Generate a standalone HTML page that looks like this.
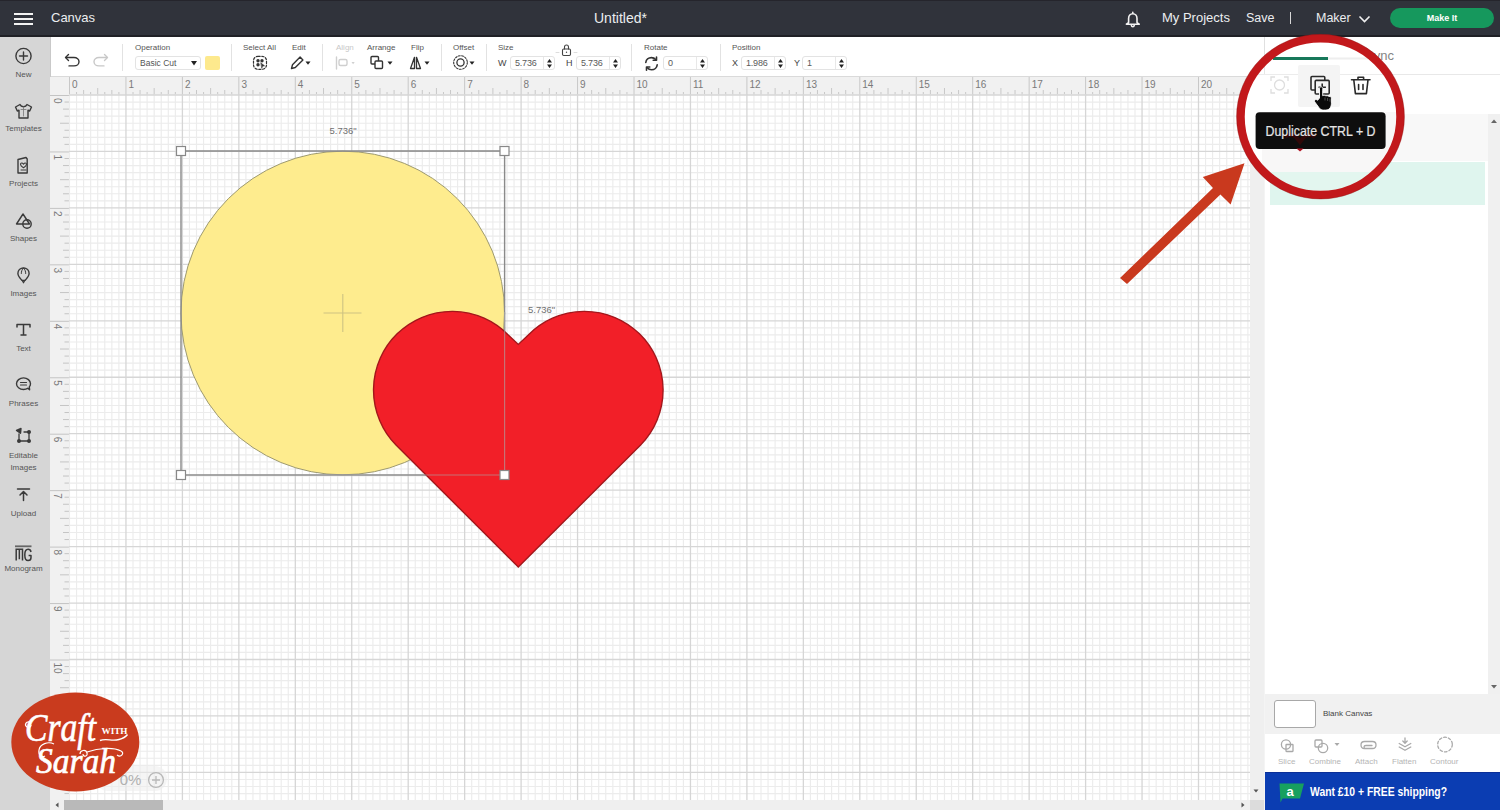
<!DOCTYPE html>
<html><head><meta charset="utf-8">
<style>
*{margin:0;padding:0;box-sizing:border-box}
html,body{width:1500px;height:810px;overflow:hidden;background:#fff;font-family:"Liberation Sans",sans-serif;position:relative}
.abs{position:absolute}
svg{position:absolute;overflow:visible}
#top{left:0;top:0;width:1500px;height:37px;background:#30333b;border-top:1px solid #25252c;border-bottom:2px solid #1f2025}
.tt{position:absolute;color:#eceef0;font-size:13px;line-height:1;white-space:nowrap}
#side{left:0;top:37px;width:51px;height:773px;background:#d6d6d6}
.sl{position:absolute;left:0;width:47px;text-align:center;font-size:8px;color:#555;line-height:1;white-space:nowrap}
#tool{left:51px;top:37px;width:1214px;height:40px;background:#fff;border-bottom:1.5px solid #dadada}
.lab{position:absolute;font-size:8px;color:#555;line-height:1;white-space:nowrap}
.sep{position:absolute;top:44px;width:1px;height:27px;background:#e2e2e2}
.inp{position:absolute;top:56px;height:14px;border:1px solid #e3e3e3;border-radius:3px;background:#fff;font-size:9px;color:#5a5a5a;line-height:12.5px;padding-left:4px;letter-spacing:-.2px}
.spin{position:absolute;right:0;top:0;width:11px;height:12px;border-left:1px solid #e8e8e8}
#panel{left:1264px;top:37px;width:236px;height:773px;background:#fff;border-left:1px solid #f4f4f4}
</style></head><body>

<!-- TOP BAR -->
<div id="top" class="abs">
  <div class="abs" style="left:14px;top:12px;width:19px;height:2px;background:#f2f2f2"></div>
  <div class="abs" style="left:14px;top:17px;width:19px;height:2px;background:#f2f2f2"></div>
  <div class="abs" style="left:14px;top:22px;width:19px;height:2px;background:#f2f2f2"></div>
  <div class="tt" style="left:51px;top:10px">Canvas</div>
  <div class="tt" style="left:594px;top:10px;font-size:14px">Untitled*</div>
  <svg style="left:1125px;top:10px" width="17" height="17" viewBox="0 0 17 17"><path d="M7.8 1.4v1.3M3.6 11.6V7.6c0-2.9 1.8-4.9 4.2-4.9s4.2 2 4.2 4.9v4l2.2 1.6H1.4zM6.2 13.6c.2 1.4.8 2.2 1.6 2.2s1.4-.8 1.6-2.2" fill="none" stroke="#f2f2f2" stroke-width="1.6" stroke-linejoin="round" stroke-linecap="round"/></svg>
  <div class="tt" style="left:1162px;top:10px">My Projects</div>
  <div class="tt" style="left:1246px;top:10px;font-size:12.5px;top:10.5px">Save</div>
  <div class="abs" style="left:1290px;top:11px;width:1.2px;height:12px;background:#d8d8d8"></div>
  <div class="tt" style="left:1316px;top:10px;font-size:12.5px;top:10.5px">Maker</div>
  <svg style="left:1358px;top:14px" width="13" height="8" viewBox="0 0 13 8"><path d="M1.5 1.5l5 5 5-5" fill="none" stroke="#f0f0f0" stroke-width="1.6"/></svg>
  <div class="abs" style="left:1390px;top:7px;width:104px;height:20px;border-radius:10px;background:#16985d;color:#fff;font-size:9px;font-weight:bold;text-align:center;line-height:20px">Make It</div>
</div>

<!-- SIDEBAR -->
<div id="side" class="abs"></div>
<div class="abs" style="left:49.5px;top:37px;width:1.5px;height:773px;background:#c9c9c9"></div>
<svg style="left:0;top:37px" width="51" height="560" viewBox="0 37 51 560" fill="none" stroke="#3a3a3a" stroke-width="1.4" stroke-linecap="round" stroke-linejoin="round">
  <!-- New -->
  <circle cx="23.5" cy="56" r="7.6"/><path d="M23.5 52v8M19.5 56h8"/>
  <!-- Templates shirt -->
  <path d="M20 104.5l-4.5 2.5 1.8 4 1.7-.8V118h9v-7.8l1.7.8 1.8-4-4.5-2.5c-.6 1.5-1.7 2.2-3.5 2.2s-2.9-.7-3.5-2.2z"/><path d="M23.5 107v9M21 109.5h5" stroke-width=".8" stroke="#777"/>
  <!-- Projects -->
  <path d="M18 159.5l8-2 1.2 1.5V173H18z"/><path d="M20.5 164.2c0-1.6 2-1.6 3 0 1-1.6 3-1.6 3 0 0 1.5-1.5 2.6-3 3.6-1.5-1-3-2.1-3-3.6z" stroke-width="1.1"/><path d="M21 170h5" stroke-width="1"/>
  <!-- Shapes -->
  <path d="M23 214l-6.5 10h13z"/><circle cx="27" cy="224" r="4.2"/>
  <!-- Images balloon -->
  <path d="M23.5 268c-3.3 0-5.6 2.4-5.6 5.4 0 2.7 2.4 5 4 7h3.2c1.6-2 4-4.3 4-7 0-3-2.3-5.4-5.6-5.4z"/><path d="M23.5 268c-1.6 1.5-2.2 3.5-2.2 5.5M23.5 268c1.6 1.5 2.2 3.5 2.2 5.5" stroke-width="1"/><path d="M22.2 280.5l1.3 2.3 1.3-2.3" stroke-width="1.2"/>
  <!-- Text T -->
  <path d="M17 327v-2.5h13v2.5M23.5 324.5V335M21 335h5" stroke-width="1.5"/>
  <!-- Phrases bubble -->
  <path d="M29.6 389.8l-1.8-1.6c-1.2.9-2.7 1.3-4.3 1.3-3.9 0-7-2.6-7-5.8s3.1-5.8 7-5.8 7 2.6 7 5.8c0 1.2-.4 2.3-1.2 3.2z"/><path d="M20.5 382.5h6M20.5 385h6" stroke-width="1.2"/>
  <!-- Editable -->
  <path d="M19 434v7h10v-9h-5" stroke-width="1.3"/><circle cx="19" cy="441" r="1.3" fill="#3a3a3a"/><circle cx="29" cy="441" r="1.3" fill="#3a3a3a"/><circle cx="29" cy="432" r="1.3" fill="#3a3a3a"/><path d="M16.5 430.5l4.5-2 -.5 4.8z" fill="#3a3a3a"/>
  <!-- Upload -->
  <path d="M17.5 489h12M23.5 500.5v-8.5M20 495l3.5-3.5 3.5 3.5" stroke-width="1.5"/>
  <!-- Monogram -->
  <path d="M15 546.3h16.5" stroke-width="1.8" stroke-linecap="butt" stroke="#666"/>
  <path d="M16.2 560.5V549.3h6.3v11.2M19.35 549.3v10" stroke-width="1.5" stroke-linecap="butt" stroke-linejoin="miter"/>
  <path d="M31 552c-.3-1.7-1.4-2.7-2.9-2.7-2 0-3.3 2-3.3 5.6s1.3 5.6 3.3 5.6c1.7 0 2.9-1.1 2.9-3.1v-2h-2.4" stroke-width="1.5" stroke-linecap="butt"/>
</svg>
<div class="sl" style="top:70.5px">New</div>
<div class="sl" style="top:125px">Templates</div>
<div class="sl" style="top:179.5px">Projects</div>
<div class="sl" style="top:234.5px">Shapes</div>
<div class="sl" style="top:289.5px">Images</div>
<div class="sl" style="top:344.5px">Text</div>
<div class="sl" style="top:399.5px">Phrases</div>
<div class="sl" style="top:452px">Editable</div>
<div class="sl" style="top:464px">Images</div>
<div class="sl" style="top:509.5px">Upload</div>
<div class="sl" style="top:564.5px">Monogram</div>

<!-- TOOLBAR -->
<div id="tool" class="abs"></div>
<svg style="left:0;top:0" width="1265" height="80" fill="none" stroke="#333" stroke-width="1.4" stroke-linecap="round" stroke-linejoin="round">
  <!-- undo -->
  <path d="M66 57.5h8c3 0 5 2 5 4.2s-2 4.2-5 4.2h-5" /><path d="M68.5 54.5L65.5 57.5 68.5 60.5"/>
  <!-- redo -->
  <path d="M107 57.5h-8c-3 0-5 2-5 4.2s2 4.2 5 4.2h5" stroke="#c8c8c8"/><path d="M104.5 54.5l3 3-3 3" stroke="#c8c8c8"/>
  <!-- select all -->
  <rect x="253.5" y="56.3" width="13" height="13" rx="4.5" stroke-dasharray="2.2 1.6" stroke-width="1.2"/><circle cx="258" cy="60.8" r="1" fill="#333"/><circle cx="262" cy="60.8" r="1" fill="#333"/><circle cx="258" cy="64.8" r="1" fill="#333"/><path d="M261 63l3.5 2.8-2 .4-.6 1.8z" fill="#333" stroke-width=".6"/>
  <!-- edit pencil -->
  <path d="M291.5 68.5l1-3.8 7.6-7.6 2.8 2.8-7.6 7.6z"/><path d="M305.5 61.5l2.5 3.2 2.5-3.2z" fill="#222" stroke="none"/>
  <!-- align (disabled) -->
  <path d="M336.5 57v12" stroke="#cfcfcf"/><rect x="339" y="59.5" width="8" height="6" rx="1.5" stroke="#cfcfcf"/><path d="M351.5 62l1.6 2.2 1.6-2.2z" fill="#d0d0d0" stroke="none"/>
  <!-- arrange -->
  <rect x="371" y="56.5" width="7.5" height="7.5" rx="1"/><rect x="375" y="61" width="7.5" height="7.5" rx="1" fill="#fff"/><path d="M387.5 61.5l2.5 3.2 2.5-3.2z" fill="#222" stroke="none"/>
  <!-- flip -->
  <path d="M410.5 68.5l4-11.2v11.2zM420.5 68.5l-4-11.2v11.2z" stroke-width="1.3"/><path d="M424.5 61.5l2.5 3.2 2.5-3.2z" fill="#222" stroke="none"/>
  <!-- offset -->
  <circle cx="460.5" cy="62.5" r="6.8" stroke-dasharray="1.8 1.5" stroke-width="1.1"/><circle cx="460.5" cy="62.5" r="3.6" stroke-width="1.3"/><path d="M469.5 61.5l2.5 3.2 2.5-3.2z" fill="#222" stroke="none"/>
  <!-- lock -->
  <rect x="562.5" y="49" width="8" height="6.5" rx="1.2" stroke-width="1.1" stroke="#444"/><path d="M564.5 49v-2a2 2 0 014 0v2" stroke-width="1.1" stroke="#444"/><circle cx="566.5" cy="52.3" r=".7" fill="#444" stroke="none"/>
  <path d="M556 52.5h3M574 52.5h3" stroke="#ddd" stroke-width="1"/>
  <!-- rotate -->
  <path d="M645.8 62.5c.3-2.9 2.7-4.9 5.6-4.9 1.8 0 3.3.8 4.3 2M657.2 64.8c-.3 2.9-2.7 4.9-5.6 4.9-1.8 0-3.3-.8-4.3-2" stroke-width="1.6"/><path d="M656.5 57v3.3h-3.3M646.5 70.3V67h3.3" stroke-width="1.6"/>
</svg>
<div class="lab" style="left:135px;top:44px">Operation</div>
<div class="inp" style="left:135px;width:66px;color:#555;font-size:8.5px;letter-spacing:0">Basic Cut<svg style="left:55px;top:4px" width="6" height="5"><path d="M0 0h6L3 4.5z" fill="#222"/></svg></div>
<div class="abs" style="left:205px;top:56px;width:15px;height:14px;background:#fde98d;border-radius:2px"></div>
<div class="sep" style="left:122px"></div>
<div class="sep" style="left:231px"></div>
<div class="lab" style="left:243px;top:44px">Select All</div>
<div class="lab" style="left:292px;top:44px">Edit</div>
<div class="sep" style="left:322px"></div>
<div class="lab" style="left:336px;top:44px;color:#c8c8c8">Align</div>
<div class="lab" style="left:367px;top:44px">Arrange</div>
<div class="lab" style="left:411px;top:44px">Flip</div>
<div class="sep" style="left:441px"></div>
<div class="lab" style="left:453px;top:44px">Offset</div>
<div class="sep" style="left:486px"></div>
<div class="lab" style="left:498px;top:44px">Size</div>
<div class="lab" style="left:498px;top:58.5px;color:#444;font-size:9px">W</div>
<div class="inp" style="left:510px;width:45px">5.736<div class="spin"><svg style="left:3px;top:2px" width="5" height="9"><path d="M0 3.5L2.5 0 5 3.5zM0 5.5h5L2.5 9z" fill="#222"/></svg></div></div>
<div class="lab" style="left:566px;top:58.5px;color:#444;font-size:9px">H</div>
<div class="inp" style="left:576px;width:45px">5.736<div class="spin"><svg style="left:3px;top:2px" width="5" height="9"><path d="M0 3.5L2.5 0 5 3.5zM0 5.5h5L2.5 9z" fill="#222"/></svg></div></div>
<div class="sep" style="left:631px"></div>
<div class="lab" style="left:644px;top:44px">Rotate</div>
<div class="inp" style="left:663px;width:45px">0<div class="spin"><svg style="left:3px;top:2px" width="5" height="9"><path d="M0 3.5L2.5 0 5 3.5zM0 5.5h5L2.5 9z" fill="#222"/></svg></div></div>
<div class="sep" style="left:720px"></div>
<div class="lab" style="left:732px;top:44px">Position</div>
<div class="lab" style="left:732px;top:58.5px;color:#444;font-size:9px">X</div>
<div class="inp" style="left:741px;width:45px">1.986<div class="spin"><svg style="left:3px;top:2px" width="5" height="9"><path d="M0 3.5L2.5 0 5 3.5zM0 5.5h5L2.5 9z" fill="#222"/></svg></div></div>
<div class="lab" style="left:794px;top:58.5px;color:#444;font-size:9px">Y</div>
<div class="inp" style="left:802px;width:45px">1<div class="spin"><svg style="left:3px;top:2px" width="5" height="9"><path d="M0 3.5L2.5 0 5 3.5zM0 5.5h5L2.5 9z" fill="#222"/></svg></div></div>

<!-- RULERS -->
<svg style="left:50px;top:77px" width="1200" height="18">
  <rect width="1200" height="18" fill="#f1f1f1"/>
  <path d="M19.50 0V18M26.56 15V18M33.61 13V18M40.67 15V18M47.72 11V18M54.78 15V18M61.84 13V18M68.89 15V18M75.95 0V18M83.01 15V18M90.06 13V18M97.12 15V18M104.18 11V18M111.23 15V18M118.29 13V18M125.34 15V18M132.40 0V18M139.46 15V18M146.51 13V18M153.57 15V18M160.62 11V18M167.68 15V18M174.74 13V18M181.79 15V18M188.85 0V18M195.91 15V18M202.96 13V18M210.02 15V18M217.08 11V18M224.13 15V18M231.19 13V18M238.24 15V18M245.30 0V18M252.36 15V18M259.41 13V18M266.47 15V18M273.52 11V18M280.58 15V18M287.64 13V18M294.69 15V18M301.75 0V18M308.81 15V18M315.86 13V18M322.92 15V18M329.98 11V18M337.03 15V18M344.09 13V18M351.14 15V18M358.20 0V18M365.26 15V18M372.31 13V18M379.37 15V18M386.43 11V18M393.48 15V18M400.54 13V18M407.59 15V18M414.65 0V18M421.71 15V18M428.76 13V18M435.82 15V18M442.88 11V18M449.93 15V18M456.99 13V18M464.04 15V18M471.10 0V18M478.16 15V18M485.21 13V18M492.27 15V18M499.33 11V18M506.38 15V18M513.44 13V18M520.49 15V18M527.55 0V18M534.61 15V18M541.66 13V18M548.72 15V18M555.77 11V18M562.83 15V18M569.89 13V18M576.94 15V18M584.00 0V18M591.06 15V18M598.11 13V18M605.17 15V18M612.23 11V18M619.28 15V18M626.34 13V18M633.39 15V18M640.45 0V18M647.51 15V18M654.56 13V18M661.62 15V18M668.68 11V18M675.73 15V18M682.79 13V18M689.84 15V18M696.90 0V18M703.96 15V18M711.01 13V18M718.07 15V18M725.12 11V18M732.18 15V18M739.24 13V18M746.29 15V18M753.35 0V18M760.41 15V18M767.46 13V18M774.52 15V18M781.58 11V18M788.63 15V18M795.69 13V18M802.74 15V18M809.80 0V18M816.86 15V18M823.91 13V18M830.97 15V18M838.03 11V18M845.08 15V18M852.14 13V18M859.19 15V18M866.25 0V18M873.31 15V18M880.36 13V18M887.42 15V18M894.48 11V18M901.53 15V18M908.59 13V18M915.64 15V18M922.70 0V18M929.76 15V18M936.81 13V18M943.87 15V18M950.93 11V18M957.98 15V18M965.04 13V18M972.09 15V18M979.15 0V18M986.21 15V18M993.26 13V18M1000.32 15V18M1007.38 11V18M1014.43 15V18M1021.49 13V18M1028.54 15V18M1035.60 0V18M1042.66 15V18M1049.71 13V18M1056.77 15V18M1063.83 11V18M1070.88 15V18M1077.94 13V18M1084.99 15V18M1092.05 0V18M1099.11 15V18M1106.16 13V18M1113.22 15V18M1120.28 11V18M1127.33 15V18M1134.39 13V18M1141.44 15V18M1148.50 0V18M1155.56 15V18M1162.61 13V18M1169.67 15V18M1176.73 11V18M1183.78 15V18M1190.84 13V18M1197.89 15V18" stroke="#c8c8c8" stroke-width="1"/>
  <g font-family="Liberation Sans" font-size="10" fill="#7a7a7a"><text x="22.0" y="11" >0</text><text x="78.5" y="11" >1</text><text x="134.9" y="11" >2</text><text x="191.4" y="11" >3</text><text x="247.8" y="11" >4</text><text x="304.2" y="11" >5</text><text x="360.7" y="11" >6</text><text x="417.2" y="11" >7</text><text x="473.6" y="11" >8</text><text x="530.0" y="11" >9</text><text x="586.5" y="11" >10</text><text x="643.0" y="11" >11</text><text x="699.4" y="11" >12</text><text x="755.9" y="11" >13</text><text x="812.3" y="11" >14</text><text x="868.8" y="11" >15</text><text x="925.2" y="11" >16</text><text x="981.7" y="11" >17</text><text x="1038.1" y="11" >18</text><text x="1094.5" y="11" >19</text><text x="1151.0" y="11" >20</text></g>
</svg>
<svg style="left:50px;top:77px" width="19" height="723">
  <rect width="19" height="723" fill="#f1f1f1"/>
  <path d="M0 18.50H19M14.5 25.06H19M13 32.11H19M14.5 39.17H19M10 46.22H19M14.5 53.28H19M13 60.34H19M14.5 67.39H19M0 74.95H19M14.5 81.51H19M13 88.56H19M14.5 95.62H19M10 102.68H19M14.5 109.73H19M13 116.79H19M14.5 123.84H19M0 131.40H19M14.5 137.96H19M13 145.01H19M14.5 152.07H19M10 159.12H19M14.5 166.18H19M13 173.24H19M14.5 180.29H19M0 187.85H19M14.5 194.41H19M13 201.46H19M14.5 208.52H19M10 215.58H19M14.5 222.63H19M13 229.69H19M14.5 236.74H19M0 244.30H19M14.5 250.86H19M13 257.91H19M14.5 264.97H19M10 272.02H19M14.5 279.08H19M13 286.14H19M14.5 293.19H19M0 300.75H19M14.5 307.31H19M13 314.36H19M14.5 321.42H19M10 328.48H19M14.5 335.53H19M13 342.59H19M14.5 349.64H19M0 357.20H19M14.5 363.76H19M13 370.81H19M14.5 377.87H19M10 384.93H19M14.5 391.98H19M13 399.04H19M14.5 406.09H19M0 413.65H19M14.5 420.21H19M13 427.26H19M14.5 434.32H19M10 441.38H19M14.5 448.43H19M13 455.49H19M14.5 462.54H19M0 470.10H19M14.5 476.66H19M13 483.71H19M14.5 490.77H19M10 497.83H19M14.5 504.88H19M13 511.94H19M14.5 518.99H19M0 526.55H19M14.5 533.11H19M13 540.16H19M14.5 547.22H19M10 554.27H19M14.5 561.33H19M13 568.39H19M14.5 575.44H19M0 583.00H19M14.5 589.56H19M13 596.61H19M14.5 603.67H19M10 610.73H19M14.5 617.78H19M13 624.84H19M14.5 631.89H19M0 639.45H19M14.5 646.01H19M13 653.06H19M14.5 660.12H19M10 667.18H19M14.5 674.23H19M13 681.29H19M14.5 688.34H19M0 695.90H19M14.5 702.46H19M13 709.51H19M14.5 716.57H19" stroke="#c4c4c4" stroke-width="1"/>
  <g font-family="Liberation Sans" font-size="10" fill="#7a7a7a"><text transform="translate(4 21.0) rotate(90)" x="0" y="0">0</text><text transform="translate(4 77.4) rotate(90)" x="0" y="0">1</text><text transform="translate(4 133.9) rotate(90)" x="0" y="0">2</text><text transform="translate(4 190.4) rotate(90)" x="0" y="0">3</text><text transform="translate(4 246.8) rotate(90)" x="0" y="0">4</text><text transform="translate(4 303.2) rotate(90)" x="0" y="0">5</text><text transform="translate(4 359.7) rotate(90)" x="0" y="0">6</text><text transform="translate(4 416.2) rotate(90)" x="0" y="0">7</text><text transform="translate(4 472.6) rotate(90)" x="0" y="0">8</text><text transform="translate(4 529.0) rotate(90)" x="0" y="0">9</text><text transform="translate(4 585.5) rotate(90)" x="0" y="0">10</text><text transform="translate(4 642.0) rotate(90)" x="0" y="0">11</text><text transform="translate(4 698.4) rotate(90)" x="0" y="0">12</text></g>
</svg>

<!-- GRID -->
<svg style="left:69px;top:94px" width="1181" height="706">
  <path d="M0.50 0V706M7.56 0V706M14.61 0V706M21.67 0V706M28.72 0V706M35.78 0V706M42.84 0V706M49.89 0V706M64.01 0V706M71.06 0V706M78.12 0V706M85.18 0V706M92.23 0V706M99.29 0V706M106.34 0V706M120.46 0V706M127.51 0V706M134.57 0V706M141.62 0V706M148.68 0V706M155.74 0V706M162.79 0V706M176.91 0V706M183.96 0V706M191.02 0V706M198.08 0V706M205.13 0V706M212.19 0V706M219.24 0V706M233.36 0V706M240.41 0V706M247.47 0V706M254.52 0V706M261.58 0V706M268.64 0V706M275.69 0V706M289.81 0V706M296.86 0V706M303.92 0V706M310.98 0V706M318.03 0V706M325.09 0V706M332.14 0V706M346.26 0V706M353.31 0V706M360.37 0V706M367.43 0V706M374.48 0V706M381.54 0V706M388.59 0V706M402.71 0V706M409.76 0V706M416.82 0V706M423.88 0V706M430.93 0V706M437.99 0V706M445.04 0V706M459.16 0V706M466.21 0V706M473.27 0V706M480.33 0V706M487.38 0V706M494.44 0V706M501.49 0V706M515.61 0V706M522.66 0V706M529.72 0V706M536.77 0V706M543.83 0V706M550.89 0V706M557.94 0V706M572.06 0V706M579.11 0V706M586.17 0V706M593.23 0V706M600.28 0V706M607.34 0V706M614.39 0V706M628.51 0V706M635.56 0V706M642.62 0V706M649.68 0V706M656.73 0V706M663.79 0V706M670.84 0V706M684.96 0V706M692.01 0V706M699.07 0V706M706.12 0V706M713.18 0V706M720.24 0V706M727.29 0V706M741.41 0V706M748.46 0V706M755.52 0V706M762.58 0V706M769.63 0V706M776.69 0V706M783.74 0V706M797.86 0V706M804.91 0V706M811.97 0V706M819.03 0V706M826.08 0V706M833.14 0V706M840.19 0V706M854.31 0V706M861.36 0V706M868.42 0V706M875.48 0V706M882.53 0V706M889.59 0V706M896.64 0V706M910.76 0V706M917.81 0V706M924.87 0V706M931.93 0V706M938.98 0V706M946.04 0V706M953.09 0V706M967.21 0V706M974.26 0V706M981.32 0V706M988.38 0V706M995.43 0V706M1002.49 0V706M1009.54 0V706M1023.66 0V706M1030.71 0V706M1037.77 0V706M1044.83 0V706M1051.88 0V706M1058.94 0V706M1065.99 0V706M1080.11 0V706M1087.16 0V706M1094.22 0V706M1101.28 0V706M1108.33 0V706M1115.39 0V706M1122.44 0V706M1136.56 0V706M1143.61 0V706M1150.67 0V706M1157.73 0V706M1164.78 0V706M1171.84 0V706M1178.89 0V706M0 8.06H1181M0 15.11H1181M0 22.17H1181M0 29.22H1181M0 36.28H1181M0 43.34H1181M0 50.39H1181M0 64.51H1181M0 71.56H1181M0 78.62H1181M0 85.68H1181M0 92.73H1181M0 99.79H1181M0 106.84H1181M0 120.96H1181M0 128.01H1181M0 135.07H1181M0 142.12H1181M0 149.18H1181M0 156.24H1181M0 163.29H1181M0 177.41H1181M0 184.46H1181M0 191.52H1181M0 198.58H1181M0 205.63H1181M0 212.69H1181M0 219.74H1181M0 233.86H1181M0 240.91H1181M0 247.97H1181M0 255.02H1181M0 262.08H1181M0 269.14H1181M0 276.19H1181M0 290.31H1181M0 297.36H1181M0 304.42H1181M0 311.48H1181M0 318.53H1181M0 325.59H1181M0 332.64H1181M0 346.76H1181M0 353.81H1181M0 360.87H1181M0 367.93H1181M0 374.98H1181M0 382.04H1181M0 389.09H1181M0 403.21H1181M0 410.26H1181M0 417.32H1181M0 424.38H1181M0 431.43H1181M0 438.49H1181M0 445.54H1181M0 459.66H1181M0 466.71H1181M0 473.77H1181M0 480.83H1181M0 487.88H1181M0 494.94H1181M0 501.99H1181M0 516.11H1181M0 523.16H1181M0 530.22H1181M0 537.27H1181M0 544.33H1181M0 551.39H1181M0 558.44H1181M0 572.56H1181M0 579.61H1181M0 586.67H1181M0 593.73H1181M0 600.78H1181M0 607.84H1181M0 614.89H1181M0 629.01H1181M0 636.06H1181M0 643.12H1181M0 650.18H1181M0 657.23H1181M0 664.29H1181M0 671.34H1181M0 685.46H1181M0 692.51H1181M0 699.57H1181" stroke="#ececec" stroke-width="1.15"/>
  <path d="M56.95 0V706M113.40 0V706M169.85 0V706M226.30 0V706M282.75 0V706M339.20 0V706M395.65 0V706M452.10 0V706M508.55 0V706M565.00 0V706M621.45 0V706M677.90 0V706M734.35 0V706M790.80 0V706M847.25 0V706M903.70 0V706M960.15 0V706M1016.60 0V706M1073.05 0V706M1129.50 0V706M0 1.00H1181M0 57.45H1181M0 113.90H1181M0 170.35H1181M0 226.80H1181M0 283.25H1181M0 339.70H1181M0 396.15H1181M0 452.60H1181M0 509.05H1181M0 565.50H1181M0 621.95H1181M0 678.40H1181" stroke="#d6d6d6" stroke-width="1.3"/>
</svg>

<!-- SCROLLBARS -->
<div class="abs" style="left:1250px;top:77px;width:14px;height:733px;background:#efefef"></div>
<div class="abs" style="left:50px;top:800px;width:1200px;height:10px;background:#efefef"></div>
<div class="abs" style="left:64px;top:800px;width:99px;height:10px;background:#b9b9b9"></div>
<div class="abs" style="left:1250px;top:800px;width:14px;height:10px;background:#dcdcdc"></div>
<svg style="left:0;top:0" width="1500" height="810">
  <path d="M58.5 802.5v5l-3-2.5z" fill="#555"/>
  <path d="M1241.5 802.5v5l3-2.5z" fill="#555"/>
  <path d="M1253.5 789.5h5l-2.5 3z" fill="#555"/>
</svg>

<!-- RIGHT PANEL -->
<div id="panel" class="abs"></div>
<div class="abs" style="left:1264px;top:37px;width:1px;height:40px;background:#e0e0e0"></div>
<div class="abs" style="left:1265px;top:74px;width:235px;height:1px;background:#e8e8e8"></div>
<div class="abs" style="left:1265px;top:114px;width:223px;height:580px;background:#fff"></div>
<div class="abs" style="left:1265px;top:114px;width:223px;height:47px;background:#f8f8f8"></div>
<div class="abs" style="left:1270px;top:161.5px;width:215px;height:43.5px;background:#dff5ee"></div>
<div class="abs" style="left:1488px;top:114px;width:12px;height:580px;background:#f0f0f0"></div>
<svg style="left:1490px;top:118px" width="8" height="6"><path d="M1 5l3-3.5L7 5z" fill="#666"/></svg>
<svg style="left:1490px;top:684px" width="8" height="6"><path d="M1 1l3 3.5L7 1z" fill="#666"/></svg>
<div class="abs" style="left:1265px;top:694px;width:235px;height:40px;background:#f1f1f1"></div>
<div class="abs" style="left:1274px;top:699.5px;width:42px;height:28.5px;background:#fff;border:1.5px solid #a8a8a8;border-radius:3px"></div>
<div class="lab" style="left:1323px;top:709.5px;color:#444">Blank Canvas</div>
<svg style="left:1265px;top:734px" width="235" height="38" fill="none" stroke="#a9a9a9" stroke-width="1.3" stroke-linecap="round" stroke-linejoin="round">
  <!-- slice -->
  <circle cx="21" cy="10.5" r="4.6"/><rect x="21" y="10.5" width="7" height="7" rx=".5"/>
  <!-- combine -->
  <rect x="50" y="6" width="7" height="7" rx="1"/><circle cx="58" cy="14" r="4.7"/><path d="M69.5 9l2.5 3 2.5-3z" fill="#a9a9a9" stroke="none"/>
  <!-- attach -->
  <path d="M103 14.5h-3.5c-2.1 0-3.5-1.4-3.5-3.5s1.4-3.5 3.5-3.5h8c2.1 0 3.5 1.4 3.5 3.5s-1.4 3.5-3.5 3.5h-6.5c-1.2 0-2-.6-2-1.5s.8-1.5 2-1.5h6"/>
  <!-- flatten -->
  <path d="M140 4v5M137.8 7l2.2 2.2 2.2-2.2M134.2 9.5l5.8 3.3 5.8-3.3M134.2 13l5.8 3.3 5.8-3.3"/>
  <!-- contour -->
  <circle cx="180" cy="10.5" r="7.3" stroke-dasharray="2.6 2.1"/>
</svg>
<div class="lab" style="left:1278px;top:757.5px;color:#b5b5b5">Slice</div>
<div class="lab" style="left:1309px;top:757.5px;color:#b5b5b5">Combine</div>
<div class="lab" style="left:1355px;top:757.5px;color:#b5b5b5">Attach</div>
<div class="lab" style="left:1392px;top:757.5px;color:#b5b5b5">Flatten</div>
<div class="lab" style="left:1430px;top:757.5px;color:#b5b5b5">Contour</div>
<div class="abs" style="left:1265px;top:772px;width:235px;height:38px;background:#0b3db2;border-top:1px solid #0a2f98"></div>
<svg style="left:1278px;top:782px" width="27" height="22"><path d="M1.5 1.5h24.5l-4 15H4.5l-2 4z" fill="#17a05f"/><text x="8.5" y="13.5" font-family="Liberation Sans" font-weight="bold" font-size="13" fill="#fff">a</text></svg>
<svg style="left:1310px;top:780px" width="160" height="20"><text x="0" y="15.5" font-family="Liberation Sans" font-weight="bold" font-size="12" fill="#fff" textLength="137" lengthAdjust="spacingAndGlyphs">Want £10 + FREE shipping?</text></svg>

<!-- CANVAS OBJECTS -->
<svg style="left:0;top:0" width="1250" height="800">
  <circle cx="342.8" cy="313" r="161.8" fill="#feec8e" stroke="#9e9a70" stroke-width="1"/>
  <path d="M323.5 313h38M342.8 294v38" stroke="#cdc282" stroke-width="1.1"/>
  <path d="M181 151H504.6V475H181z" fill="none" stroke="#8a8a8a" stroke-width="1.4"/>
  <path d="M518.3 567 L396 445 A78.5 78.5 0 1 1 508.3 335 L518.3 344.4 L528.3 335 A78.5 78.5 0 1 1 640.6 445 Z" fill="#f21f28" stroke="#a3161b" stroke-width="1.4"/>
  <path d="M504.6 312V475H181" fill="none" stroke="#aaa" stroke-width="1.2" opacity=".6"/>
  <rect x="176.5" y="146.5" width="9" height="9" fill="#fff" stroke="#888" stroke-width="1.2"/>
  <rect x="500" y="146.5" width="9" height="9" fill="#fff" stroke="#888" stroke-width="1.2"/>
  <rect x="176.5" y="470.5" width="9" height="9" fill="#fff" stroke="#888" stroke-width="1.2"/>
  <rect x="500" y="470.5" width="9" height="9" fill="#fff" stroke="#888" stroke-width="1.2"/>
  <text x="329.5" y="134" font-family="Liberation Sans" font-size="9.5" fill="#707070">5.736"</text>
  <text x="528" y="313" font-family="Liberation Sans" font-size="9.5" fill="#707070">5.736"</text>
</svg>


<!-- ZOOM CONTROL -->
<div class="abs" style="left:96px;top:766px;width:71px;height:25px;border-radius:12px;background:rgba(236,236,236,.55)"></div>
<svg style="left:0;top:0" width="200" height="800">
  <text x="119.7" y="785" font-family="Liberation Sans" font-size="15" fill="#b0b0b0">0%</text>
  <circle cx="156" cy="780" r="7.4" fill="none" stroke="#b8b8b8" stroke-width="1.3"/>
  <path d="M156 776v8M152 780h8" stroke="#b8b8b8" stroke-width="1.3"/>
</svg>

<!-- LOGO -->
<svg style="left:0;top:0" width="200" height="810">
  <ellipse cx="75.3" cy="742.1" rx="64" ry="49.5" fill="#c93b1e"/>
  <text x="25" y="741" font-family="Liberation Serif" font-style="italic" font-size="41" fill="#fff" stroke="#fff" stroke-width=".6" textLength="71" lengthAdjust="spacingAndGlyphs">Craft</text>
  <text x="101.5" y="733.5" font-family="Liberation Serif" font-weight="bold" font-size="8.5" fill="#fff" textLength="26" lengthAdjust="spacingAndGlyphs">WITH</text>
  <path d="M100 740.5c6-2.5 12 1 19-1 4-1 7-3 8.5-5" fill="none" stroke="#fff" stroke-width="1.4"/>
  <path d="M80 754c0-4 6-5 7-1s-4 4-4 1M87 752c12-4 26-5 34-1 4 2 0 7-4 4" fill="none" stroke="#fff" stroke-width="1.2"/>
  <text x="36" y="773" font-family="Liberation Serif" font-style="italic" font-size="35" fill="#fff" stroke="#fff" stroke-width=".7" textLength="80" lengthAdjust="spacingAndGlyphs">Sarah</text>
  <path d="M54 744c-6-3-14 0-15 6-1 5 3 8 6 6" fill="none" stroke="#fff" stroke-width="1.2"/>
  <path d="M30 722c-4-1-6 3-3 5 2 1 4 0 4-2" fill="none" stroke="#fff" stroke-width="1.2"/>
</svg>

<!-- ARROW -->
<svg style="left:0;top:0" width="1500" height="810">
  <path d="M1120 278L1213 188L1202.8 177L1244.5 163.3L1230.6 204.6L1220.4 194.4L1127 284Z" fill="#c9391e"/>
</svg>

<svg style="left:0;top:0" width="1500" height="810">
  <text x="1365" y="60" font-family="Liberation Sans" font-size="13" fill="#858585">Sync</text>
  <path d="M1354 52.5l3 1.5M1356.5 55.5l2.5 3" stroke="#999" stroke-width="1.3"/>
</svg>
<!-- MAGNIFIER -->
<svg style="left:0;top:0" width="1500" height="810">
  <defs><clipPath id="mc"><ellipse cx="1320.5" cy="116.65" rx="80" ry="78.4"/></clipPath></defs>
  <g clip-path="url(#mc)">
    <rect x="1230" y="30" width="180" height="175" fill="#fff"/>
    <path d="M1264.5 36V74" stroke="#e6e6e6" stroke-width="1"/>
    <rect x="1273" y="57" width="55" height="3" fill="#17785a"/>
    <rect x="1328" y="57.5" width="40" height="2" fill="#eeeeee"/>
    <path d="M1237 74.5H1404" stroke="#ececec" stroke-width="1"/>
    <rect x="1298" y="65" width="42" height="42" rx="2" fill="#f4f4f4"/>
    <!-- disabled icon -->
    <g fill="none" stroke="#dedede" stroke-width="1.3">
      <circle cx="1279.5" cy="85" r="5"/><path d="M1271 81v-4h4M1284 77h4v4M1288 89v4h-4M1275 93h-4v-4"/>
    </g>
    <!-- duplicate -->
    <g fill="none" stroke="#2a2a2a" stroke-width="1.6" stroke-linejoin="round">
      <path d="M1315.2 90H1312a1 1 0 01-1-1V77.5a1 1 0 011-1h11.8a1 1 0 011 1v3"/>
      <rect x="1315.2" y="80.4" width="14" height="13.6" rx="1"/>
      <path d="M1322.2 83.5v7.4M1318.5 87.2h7.4"/>
    </g>
    <!-- trash -->
    <g fill="none" stroke="#2a2a2a" stroke-width="1.6" stroke-linejoin="round" stroke-linecap="round">
      <path d="M1351.5 79.8h18.5M1358 79.5v-2.3h5.6v2.3M1353.8 80l1.6 13.6h11l1.6-13.6M1358.6 84.5v5M1363 84.5v5"/>
    </g>
    <!-- list rows -->
    <rect x="1262" y="112" width="150" height="60" fill="#f8f7f7"/>
    <rect x="1262" y="172" width="150" height="40" fill="#e3f6ef"/>
    <path d="M1288 199c4-3 9-3 13-1" stroke="#f8d878" stroke-width="3" fill="none"/>
    <!-- tooltip -->
    <rect x="1255.6" y="112.2" width="130" height="36.7" rx="4" fill="#0e0e0e"/>
    <path d="M1285 137c3-3 8-3 11 0l4 5 4-5c3-3 8-3 11 0" stroke="#3a0808" stroke-width="4" fill="none" opacity=".8"/>
    <path d="M1296.5 148.5l3.5 3 3.5-3z" fill="#b01020"/>
    <text x="1265.5" y="135.8" font-family="Liberation Sans" font-size="14.5" fill="#e4e4e4" stroke="#e4e4e4" stroke-width=".2" textLength="110" lengthAdjust="spacingAndGlyphs">Duplicate CTRL + D</text>
    <!-- hand cursor -->
    <path d="M1319.5 98V88.5c0-1 .7-1.7 1.6-1.7s1.6.7 1.6 1.7v7.2c.5-.5 2.8-.6 3.2.3.6-.5 2.6-.4 3 .6 1.2-.4 2.5.2 2.5 1.5v5.5c0 3.5-2 6.5-5.5 6.5h-2.5c-2 0-3.2-.8-4.3-2.3l-4.3-5.8c-.6-.9-.3-1.9.5-2.3.8-.4 1.7-.1 2.3.6z" fill="#0a0a0a" stroke="#fff" stroke-width=".9"/>
    <path d="M1325 97.5v3M1327.6 98v3M1330 98.7v3" stroke="#777" stroke-width=".6"/>
  </g>
  <ellipse cx="1320.5" cy="116.65" rx="79.85" ry="78.25" fill="none" stroke="#c2181b" stroke-width="8.2"/>
  <ellipse cx="1320.5" cy="116.65" rx="83.9" ry="82.3" fill="none" stroke="#8e1414" stroke-width=".8" opacity=".5"/>
</svg>

</body></html>
